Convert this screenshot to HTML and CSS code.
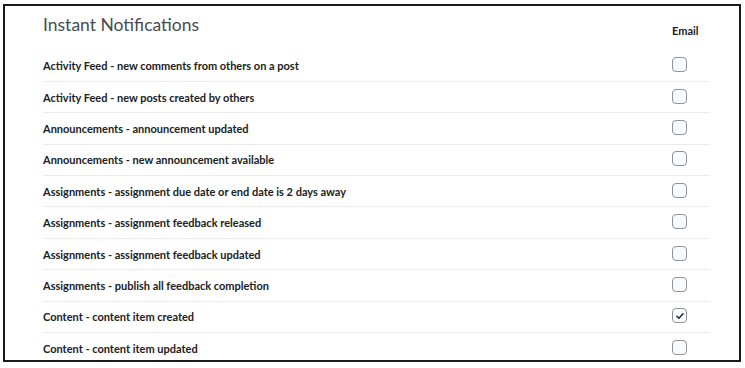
FILE: index.html
```html
<!DOCTYPE html>
<html lang="en">
<head>
    <meta charset="UTF-8">
    <title>Instant Notifications</title>
    <link rel="stylesheet" href="styles.css">
</head>
<body>
    <div class="frame">
        <div class="header">
            <h1>Instant Notifications</h1>
            <div class="col-title">Email</div>
        </div>

        <div class="row"><span class="label">Activity Feed - new comments from others on a post</span><span class="cell"><span class="box"></span></span></div>
        <div class="row"><span class="label">Activity Feed - new posts created by others</span><span class="cell"><span class="box"></span></span></div>
        <div class="row"><span class="label">Announcements - announcement updated</span><span class="cell"><span class="box"></span></span></div>
        <div class="row"><span class="label">Announcements - new announcement available</span><span class="cell"><span class="box"></span></span></div>
        <div class="row"><span class="label">Assignments - assignment due date or end date is 2 days away</span><span class="cell"><span class="box"></span></span></div>
        <div class="row"><span class="label">Assignments - assignment feedback released</span><span class="cell"><span class="box"></span></span></div>
        <div class="row"><span class="label">Assignments - assignment feedback updated</span><span class="cell"><span class="box"></span></span></div>
        <div class="row"><span class="label">Assignments - publish all feedback completion</span><span class="cell"><span class="box"></span></span></div>
        <div class="row">
            <span class="label">Content - content item created</span>
            <span class="cell">
                <span class="box checked">
                    <svg viewBox="0 0 12 12" width="10" height="10"><path d="M2.2 6.4 L4.7 8.7 L9.6 3.4" fill="none" stroke="#222" stroke-width="1.7" stroke-linecap="round" stroke-linejoin="round"/></svg>
                </span>
            </span>
        </div>
        <div class="row last"><span class="label">Content - content item updated</span><span class="cell"><span class="box"></span></span></div>
    </div>
</body>
</html>
```

FILE: styles.css
```css
body {
    margin: 0;
    background: #fff;
    font-family: Lato, "Open Sans", sans-serif;
    color: #202122;
}
.frame {
    margin: 4px 4px 0 3px;
    height: 358px;
    border: 2px solid #1a1a1a;
    padding: 0 29px 0 38px;
    overflow: hidden;
    box-sizing: border-box;
}
.header {
    display: grid;
    grid-template-columns: 1fr 68px;
    height: 44.5px;
}
h1 {
    margin: 0;
    padding-top: 7px;
    font-size: 17.5px;
    line-height: 24px;
    font-weight: 400;
    color: #494c4e;
}
.col-title {
    padding: 18px 0 0 30px;
    font-size: 11px;
    line-height: 14px;
    font-weight: 700;
    color: #202122;
}
.row {
    display: grid;
    grid-template-columns: 1fr 68px;
    align-items: center;
    height: 31.4px;
    border-bottom: 1px solid #ececec;
    box-sizing: border-box;
}
.row.last {
    border-bottom: none;
}
.label {
    font-size: 11px;
    font-weight: 700;
    color: #202122;
}
.cell {
    padding-left: 30px;
    display: flex;
    margin-top: -2px;
}
.box {
    width: 15px;
    height: 15px;
    border: 1px solid #8e9296;
    border-radius: 4px;
    background: #f9fafb;
    box-sizing: border-box;
    display: flex;
    align-items: center;
    justify-content: center;
}
.box svg {
    display: block;
}
```
